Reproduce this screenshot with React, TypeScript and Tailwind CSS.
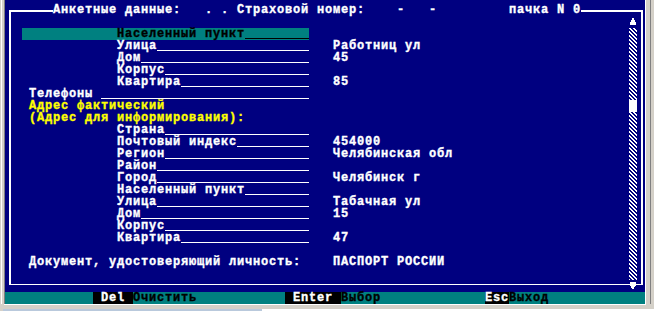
import React from 'react';

type Field = { label: string; value?: string; active?: boolean };

const homeAddress: Field[] = [
  { label: 'Населенный пункт', active: true },
  { label: 'Улица', value: 'Работниц ул' },
  { label: 'Дом', value: '45' },
  { label: 'Корпус' },
  { label: 'Квартира', value: '85' },
];

const realAddress: Field[] = [
  { label: 'Страна' },
  { label: 'Почтовый индекс', value: '454000' },
  { label: 'Регион', value: 'Челябинская обл' },
  { label: 'Район' },
  { label: 'Город', value: 'Челябинск г' },
  { label: 'Населенный пункт' },
  { label: 'Улица', value: 'Табачная ул' },
  { label: 'Дом', value: '15' },
  { label: 'Корпус' },
  { label: 'Квартира', value: '47' },
];

// 66 знакомест, колонки 6..71
const title = 'Анкетные данные:   . . Страховой номер:    -   -         пачка N 0';

function FieldRow({ label, value, active }: Field) {
  return (
    <div className="flex h-[12px]">
      <div className="flex w-[296px]">
        <div
          className={
            active
              ? 'flex flex-1 ml-[9px] pl-[95px] bg-[#008080] text-black'
              : 'flex flex-1 pl-[104px]'
          }
        >
          <span className="whitespace-pre">{label}</span>
          <span className={active ? 'flex-1 h-[11px] border-b border-black' : 'flex-1 h-[11px] border-b border-white'} />
        </div>
      </div>
      <span className="ml-[24px] whitespace-pre">{value}</span>
    </div>
  );
}

function Hatch({ id, className }: { id: string; className: string }) {
  return (
    <svg className={'block w-[8px] ' + className} shapeRendering="crispEdges">
      <defs>
        <pattern id={id} width="4" height="4" patternUnits="userSpaceOnUse">
          <rect width="4" height="4" fill="#000080" />
          <rect x="0" y="0" width="2" height="1" fill="#fff" />
          <rect x="1" y="1" width="2" height="1" fill="#fff" />
          <rect x="2" y="2" width="2" height="1" fill="#fff" />
          <rect x="3" y="3" width="1" height="1" fill="#fff" />
          <rect x="0" y="3" width="1" height="1" fill="#fff" />
        </pattern>
      </defs>
      <rect width="100%" height="100%" fill={`url(#${id})`} />
    </svg>
  );
}

function ScrollBar() {
  return (
    <div className="flex flex-col w-[8px] h-[276px] mr-[4px] self-start">
      <svg className="block w-[8px] h-[12px]" viewBox="0 0 8 12" shapeRendering="crispEdges">
        <polygon points="4,1 7,7 7,9 1,9 1,7" fill="#fff" />
      </svg>
      <Hatch id="trackTop" className="h-[72px]" />
      <div className="h-[12px] bg-white" />
      <Hatch id="trackBottom" className="h-[168px]" />
      <svg className="block w-[8px] h-[12px]" viewBox="0 0 8 12" shapeRendering="crispEdges">
        <polygon points="1,2 7,2 7,5 4,10 1,5" fill="#fff" />
      </svg>
    </div>
  );
}

export default function App() {
  return (
    <div className="w-[654px] h-[311px] flex flex-col bg-[#d4d0c8] overflow-hidden font-[Liberation_Mono,monospace] font-bold text-[12px] leading-[12px] tracking-[0.8px] [-webkit-text-stroke:0.35px_currentColor]">
      <div className="flex h-[304px]">
        {/* левая рамка окна */}
        <div className="flex w-[5px]">
          <div className="w-[1px] bg-[#d4d0c8]" />
          <div className="w-[1px] bg-white" />
          <div className="w-[2px] bg-[#d4d0c8]" />
          <div className="w-[1px] bg-[#808080]" />
        </div>

        <div className="flex flex-col w-[640px]">
          <div className="h-[292px] bg-[#000080] text-white pt-[10px]">
            <div className="ml-[4px] w-[634px] h-[275px] flex flex-col border-x-2 border-t-2 border-b border-white">
              <div className="flex h-[12px] -mt-[8px] shrink-0">
                <div className="w-[42px]" />
                <span className="whitespace-pre bg-[#000080]">{title}</span>
              </div>

              <div className="flex flex-1">
                <div className="flex-1 pl-[2px] pt-[12px]">
                  {homeAddress.map((f, i) => (
                    <FieldRow key={'h' + i} {...f} />
                  ))}
                  <div className="flex h-[12px] w-[296px] pl-[16px]">
                    <span className="whitespace-pre">Телефоны </span>
                    <span className="flex-1 h-[11px] border-b border-white" />
                  </div>
                  <div className="h-[12px] pl-[16px] text-[#ffff00]">Адрес фактический</div>
                  <div className="h-[12px] pl-[16px] text-[#ffff00]">(Адрес для информирования):</div>
                  {realAddress.map((f, i) => (
                    <FieldRow key={'r' + i} {...f} />
                  ))}
                  <div className="h-[12px]" />
                  <div className="flex h-[12px]">
                    <span className="w-[320px] pl-[16px]">Документ, удостоверяющий личность:</span>
                    <span>ПАСПОРТ РОССИИ</span>
                  </div>
                </div>
                <ScrollBar />
              </div>
            </div>
          </div>

          {/* строка подсказок */}
          <div className="flex h-[12px] bg-[#008080] whitespace-pre">
            <span className="ml-[88px] bg-black text-white">{' Del '}</span>
            <span className="w-[152px] text-black">Очистить</span>
            <span className="bg-black text-white">{' Enter '}</span>
            <span className="w-[144px] text-black">Выбор</span>
            <span className="bg-black text-white">Esc</span>
            <span className="text-black">Выход</span>
          </div>
        </div>

        {/* правая рамка окна */}
        <div className="flex w-[9px]">
          <div className="w-[1px] bg-white" />
          <div className="w-[4px] bg-[#d4d0c8]" />
          <div className="w-[1px] bg-[#808080]" />
          <div className="w-[3px] bg-[#d4d0c8]" />
        </div>
      </div>

      {/* нижняя рамка окна */}
      <div className="flex flex-col h-[7px]">
        <div className="h-[1px] ml-[4px] w-[642px] bg-white" />
        <div className="h-[4px]" />
        <div className="flex h-[2px]">
          <div className="w-[3px]" />
          <div className="w-[259px] bg-[#b9c9dc]" />
          <div className="flex-1 bg-white" />
        </div>
      </div>
    </div>
  );
}
